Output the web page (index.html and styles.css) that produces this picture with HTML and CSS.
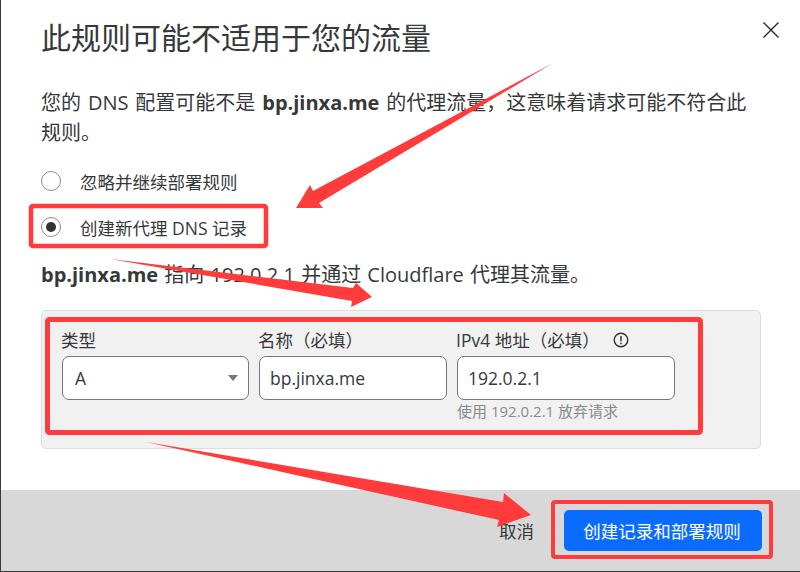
FILE: index.html
```html
<!DOCTYPE html>
<html lang="zh-CN">
<head>
<meta charset="utf-8">
<title>此规则可能不适用于您的流量</title>
<link rel="stylesheet" href="styles.css">
</head>
<body>
<div class="modal">
  <div class="content">
    <header class="head">
      <h1 class="title">此规则可能不适用于您的流量</h1>
      <button class="close" aria-label="关闭">
        <svg width="16" height="16" viewBox="0 0 16 16"><path d="M.5.5l15 15M15.5.5l-15 15" fill="none" stroke="#222" stroke-width="1.3"/></svg>
      </button>
    </header>
    <p class="para">您的 DNS 配置可能不是 <b>bp.jinxa.me</b> 的代理流量，这意味着请求可能不符合此规则。</p>
    <div class="radios">
      <label class="radio"><span class="dot"></span><span>忽略并继续部署规则</span></label>
      <label class="radio"><span class="dot on"></span><span>创建新代理 DNS 记录</span></label>
    </div>
    <p class="note"><b>bp.jinxa.me</b> 指向 192.0.2.1 并通过 Cloudflare 代理其流量。</p>
    <section class="panel">
      <div class="field f-type">
        <div class="label">类型</div>
        <div class="box select"><span>A</span><i class="caret"></i></div>
      </div>
      <div class="field f-name">
        <div class="label">名称（必填）</div>
        <div class="box">bp.jinxa.me</div>
      </div>
      <div class="field f-ip">
        <div class="label"><span>IPv4 地址（必填）</span><svg class="info" width="16" height="16" viewBox="0 0 16 16"><circle cx="8" cy="8" r="6.8" fill="none" stroke="#333" stroke-width="1.4"/><path d="M8 4v5.2M8 10.6v1.6" stroke="#333" stroke-width="1.5" fill="none"/></svg></div>
        <div class="box">192.0.2.1</div>
        <div class="hint">使用 192.0.2.1 放弃请求</div>
      </div>
    </section>
  </div>
  <footer class="foot">
    <button class="cancel">取消</button>
    <button class="primary">创建记录和部署规则</button>
  </footer>
</div>
<svg class="marks" width="800" height="572" viewBox="0 0 800 572">
  <g fill="#ff3b3b">
    <polygon points="553,63 319,203 323,208 296,208 310,185 313,191"/>
    <polygon points="110,259 353,288 356,283 372,297 351,307 352,301"/>
    <polygon points="146,442 503,502 504,493 531,515 497,527 499,520"/>
  </g>
  <g fill="none" stroke="#ff3b3b">
    <rect x="31" y="206" width="235" height="40" rx="2" stroke-width="4.5"/>
    <rect x="47.5" y="319.5" width="653" height="113" rx="2" stroke-width="5"/>
    <rect x="553" y="502" width="218" height="55" rx="2" stroke-width="4"/>
  </g>
</svg>
</body>
</html>
```
FILE: styles.css
```css
* { box-sizing: border-box; }
html, body { margin: 0; height: 572px; overflow: hidden; background: #3a3a3a; }
body {
  position: relative;
  font-family: "Open Sans", "Noto Sans CJK SC", sans-serif;
  color: #36393a;
}
.modal {
  margin-left: 1px;
  width: 799px;
  height: 571px;
  background: #fff;
  display: flex;
  flex-direction: column;
}
.content { flex: 1; padding: 0 39px 0 40px; }
.head { display: flex; align-items: center; justify-content: space-between; height: 78px; position: relative; }
.title { margin: 0; font-size: 30px; font-weight: 400; line-height: 40px; color: #36393a; position: relative; top: -1px; }
.close {
  position: absolute; right: -18px; top: 22px;
  width: 16px; height: 16px; padding: 0; border: 0; background: none; display: flex;
}
.para { margin: 10px 0 0; width: 715px; font-size: 20px; line-height: 30px; word-spacing: 1.7px; }
.radios { margin-top: 18px; display: flex; flex-direction: column; gap: 16px; }
.radio { display: flex; align-items: center; gap: 19px; height: 30px; font-size: 17.5px; }
.dot {
  width: 20px; height: 20px; border: 1px solid #8a8a8a; border-radius: 50%;
  background: #fff; display: flex; align-items: center; justify-content: center;
}
.dot.on::after { content: ""; width: 10px; height: 10px; border-radius: 50%; background: #333; }
.note { margin: 18px 0 0; font-size: 20px; line-height: 30px; word-spacing: 1px; }
.panel {
  margin-top: 20px; width: 720px; height: 139px;
  background: #f1f1f1; border: 1px solid #ddd; border-radius: 5px;
  padding: 14px 20px 0; display: flex; gap: 10px;
}
.field { flex: none; }
.f-type { width: 187px; }
.f-name { width: 188px; }
.f-ip { width: 218px; }
.label { font-size: 17.5px; line-height: 30px; height: 31px; display: flex; align-items: flex-start; white-space: nowrap; margin-left: -1px; }
.info { margin: 7px 0 0 13px; }
.box {
  height: 44px; border: 1px solid #777; border-radius: 7px; background: #fff;
  padding: 0 10px; font-size: 17.5px; line-height: 42px; color: #36393a;
}
.select { display: flex; align-items: center; justify-content: space-between; padding: 0 10px 0 12px; }
.caret { width: 0; height: 0; border: 5.5px solid transparent; border-top: 6px solid #777; border-bottom: 0; }
.hint { font-size: 15px; line-height: 22px; color: #8a8a8a; }
.foot {
  height: 81px; background: #d8d8d8; display: flex; align-items: center; justify-content: flex-end;
  padding: 0 38px 0 0; gap: 30px;
}
.cancel { border: 0; background: none; padding: 0; font: inherit; font-size: 17.5px; color: #36393a; }
.primary {
  width: 198px; height: 41px; border: 0; border-radius: 5px; background: #0a6cff;
  color: #fff; font: inherit; font-size: 17.5px; padding: 0 2px 0 0;
}
.marks { position: absolute; left: 0; top: 0; pointer-events: none; }
```
